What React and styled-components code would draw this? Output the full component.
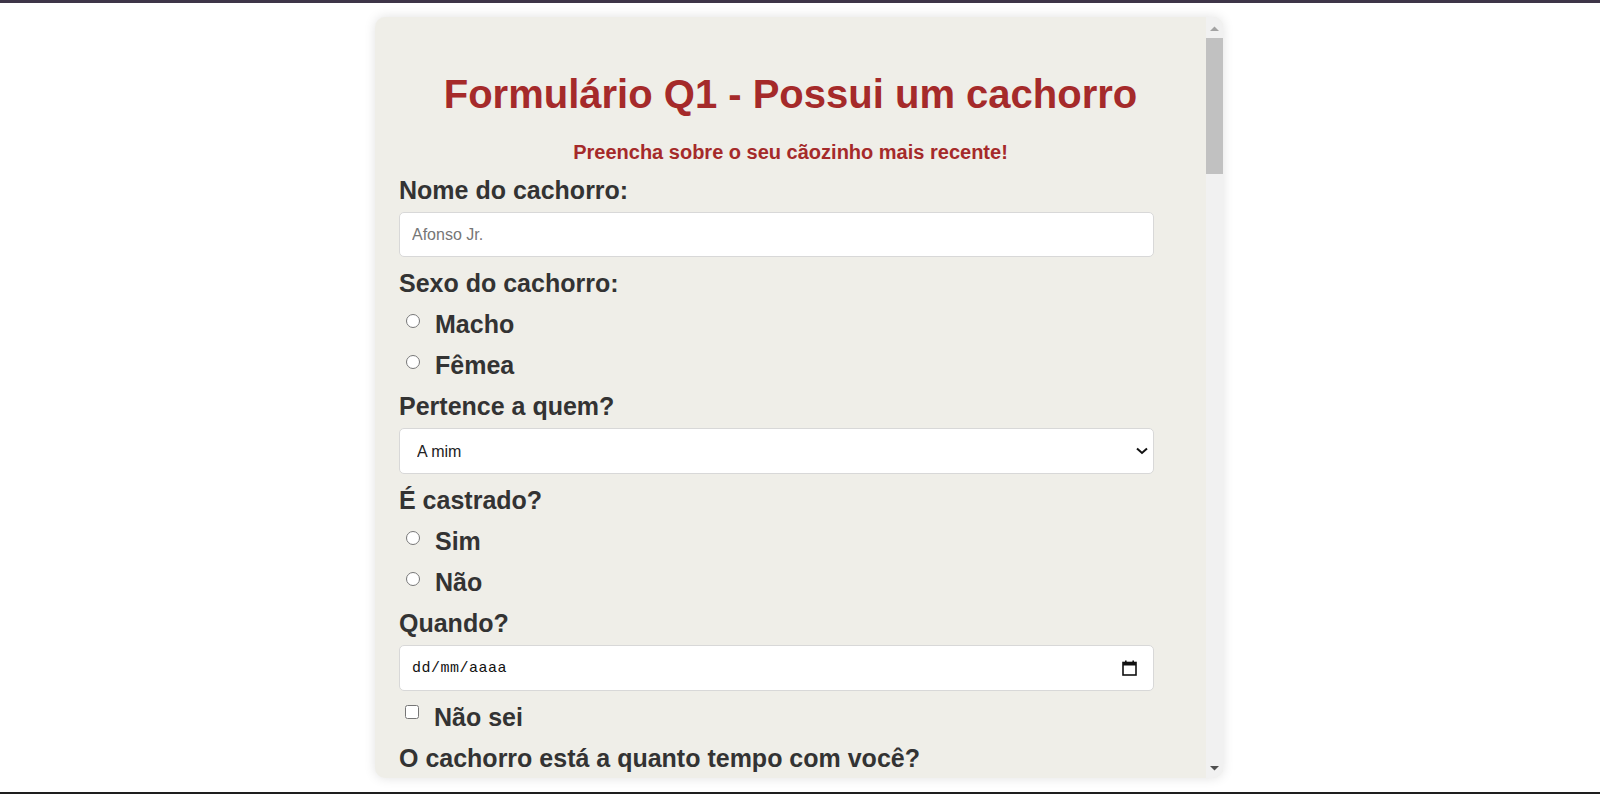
import styled, { createGlobalStyle } from 'styled-components';

const GlobalStyle = createGlobalStyle`
  html, body {
    margin: 0;
    padding: 0;
    background: #ffffff;
  }
  body {
    font-family: "Liberation Sans", Arial, sans-serif;
  }
`;

const Page = styled.div`
  box-sizing: border-box;
  height: 794px;
  border-top: 3px solid #3e3548;
  border-bottom: 2px solid #1e1e1e;
  padding-top: 14px;
  display: flex;
  justify-content: center;
  align-items: flex-start;
`;

const Card = styled.main`
  display: flex;
  width: 848px;
  height: 761px;
  margin-left: -2px;
  background: #efeee8;
  border-radius: 10px;
  box-shadow: 0 0 12px rgba(0, 0, 0, 0.12);
  overflow: hidden;
`;

const Viewport = styled.div`
  flex: 1;
  min-width: 0;
  overflow: hidden;
`;

const Rail = styled.div`
  width: 17px;
  flex-shrink: 0;
  display: flex;
  flex-direction: column;
  background: #f1f1f1;
`;

const RailButton = styled.div`
  height: ${(p) => p.$h}px;
  display: flex;
  justify-content: center;
  align-items: ${(p) => (p.$up ? 'flex-end' : 'flex-start')};
  padding: ${(p) => (p.$up ? '0 0 7px' : '5px 0 0')};
  box-sizing: border-box;
`;

const Thumb = styled.div`
  height: 136px;
  background: #c1c1c1;
`;

const Track = styled.div`
  flex: 1;
`;

const Sheet = styled.div`
  padding-top: 54px;
`;

const Title = styled.h1`
  margin: 0;
  font-size: 40px;
  line-height: 46px;
  font-weight: 700;
  color: #a52a2a;
  text-align: center;
`;

const Subtitle = styled.p`
  margin: 24px 0 0;
  font-size: 20px;
  line-height: 23px;
  font-weight: 700;
  color: #a52a2a;
  text-align: center;
`;

const Form = styled.form`
  margin: 12px 52px 0 24px;
  display: flex;
  flex-direction: column;
  gap: 12px;
`;

const Field = styled.div`
  display: flex;
  flex-direction: column;
  gap: 7px;
`;

const Question = styled.label`
  font-size: 25px;
  line-height: 29px;
  font-weight: 700;
  color: #333333;
`;

const boxBase = `
  box-sizing: border-box;
  width: 100%;
  background: #ffffff;
  border: 1px solid #d8d8d8;
  border-radius: 5px;
  font-family: "Liberation Sans", Arial, sans-serif;
  font-size: 16px;
  color: #222222;
  outline: none;
`;

const TextInput = styled.input`
  ${boxBase}
  height: 45px;
  padding: 0 12px;

  &::placeholder {
    color: #767676;
  }
`;

const SelectBox = styled.div`
  position: relative;
`;

const Select = styled.select`
  ${boxBase}
  display: block;
  height: 46px;
  padding: 0 30px 0 17px;
  appearance: none;
`;

const Chevron = styled.svg`
  position: absolute;
  right: 6px;
  top: 19px;
  pointer-events: none;
`;

const DateBox = styled.div`
  ${boxBase}
  display: flex;
  align-items: center;
  height: 46px;
  padding: 0 16px 0 12px;
`;

const DateText = styled.input`
  flex: 1;
  border: none;
  outline: none;
  background: transparent;
  padding: 0;
  font-family: "Liberation Mono", "DejaVu Sans Mono", monospace;
  font-size: 15px;
  letter-spacing: 0.5px;
  color: #111111;

  &::placeholder {
    color: #111111;
  }
`;

const Option = styled.label`
  display: flex;
  align-items: flex-start;
  font-size: 25px;
  line-height: 29px;
  font-weight: 700;
  color: #333333;
`;

const Radio = styled.input.attrs({ type: 'radio' })`
  width: 14px;
  height: 14px;
  margin: 4px 15px 0 7px;
`;

const Check = styled.input.attrs({ type: 'checkbox' })`
  width: 14px;
  height: 14px;
  margin: 2px 15px 0 6px;
`;

const TextArea = styled.textarea`
  ${boxBase}
  height: 120px;
  padding: 12px;
  resize: vertical;
`;

const Submit = styled.button`
  align-self: flex-start;
  height: 46px;
  padding: 0 28px;
  border: none;
  border-radius: 5px;
  background: #a52a2a;
  color: #ffffff;
  font-family: "Liberation Sans", Arial, sans-serif;
  font-size: 18px;
  font-weight: 700;
`;

const CalendarIcon = () => (
  <svg width="15" height="16" viewBox="0 0 15 16">
    <rect x="1" y="2.5" width="13" height="12.5" fill="none" stroke="#111" strokeWidth="1.6" />
    <rect x="1" y="2.5" width="13" height="3" fill="#111" />
    <rect x="3" y="0.5" width="1.6" height="2.5" fill="#111" />
    <rect x="10.4" y="0.5" width="1.6" height="2.5" fill="#111" />
  </svg>
);

const SelectArrow = () => (
  <Chevron width="12" height="8" viewBox="0 0 12 8">
    <polyline points="1,1.5 6,6 11,1.5" fill="none" stroke="#111" strokeWidth="2" />
  </Chevron>
);

const ChoiceGroup = ({ name, options }) =>
  options.map((opt) => (
    <Option key={opt}>
      <Radio name={name} value={opt} />
      {opt}
    </Option>
  ));

const App = () => (
  <>
    <GlobalStyle />
    <Page>
      <Card>
        <Viewport>
          <Sheet>
            <Title>Formulário Q1 - Possui um cachorro</Title>
            <Subtitle>Preencha sobre o seu cãozinho mais recente!</Subtitle>
            <Form onSubmit={(e) => e.preventDefault()}>
              <Field>
                <Question htmlFor="nome">Nome do cachorro:</Question>
                <TextInput id="nome" placeholder="Afonso Jr." />
              </Field>

              <Question>Sexo do cachorro:</Question>
              <ChoiceGroup name="sexo" options={['Macho', 'Fêmea']} />

              <Field>
                <Question htmlFor="dono">Pertence a quem?</Question>
                <SelectBox>
                  <Select id="dono" defaultValue="mim">
                    <option value="mim">A mim</option>
                    <option value="familia">À minha família</option>
                    <option value="outro">A outra pessoa</option>
                  </Select>
                  <SelectArrow />
                </SelectBox>
              </Field>

              <Question>É castrado?</Question>
              <ChoiceGroup name="castrado" options={['Sim', 'Não']} />

              <Field>
                <Question htmlFor="quando">Quando?</Question>
                <DateBox>
                  <DateText id="quando" placeholder="dd/mm/aaaa" />
                  <CalendarIcon />
                </DateBox>
              </Field>

              <Option>
                <Check />
                Não sei
              </Option>

              <Field>
                <Question htmlFor="tempo">O cachorro está a quanto tempo com você?</Question>
                <SelectBox>
                  <Select id="tempo" defaultValue="1">
                    <option value="1">Menos de 1 ano</option>
                    <option value="2">De 1 a 5 anos</option>
                    <option value="3">Mais de 5 anos</option>
                  </Select>
                  <SelectArrow />
                </SelectBox>
              </Field>

              <Field>
                <Question htmlFor="raca">Qual a raça?</Question>
                <TextInput id="raca" placeholder="Vira-lata" />
              </Field>

              <Question>Qual o porte?</Question>
              <ChoiceGroup name="porte" options={['Pequeno', 'Médio', 'Grande']} />

              <Field>
                <Question htmlFor="obs">Observações:</Question>
                <TextArea id="obs" placeholder="Conte um pouco sobre ele..." />
              </Field>

              <Submit type="submit">Enviar</Submit>
            </Form>
          </Sheet>
        </Viewport>
        <Rail>
          <RailButton $h={21} $up>
            <svg width="9" height="5" viewBox="0 0 9 5">
              <path d="M0 5 L4.5 0.5 L9 5 Z" fill="#a3a3a3" />
            </svg>
          </RailButton>
          <Thumb />
          <Track />
          <RailButton $h={17}>
            <svg width="9" height="5" viewBox="0 0 9 5">
              <path d="M0 0 L9 0 L4.5 4.5 Z" fill="#505050" />
            </svg>
          </RailButton>
        </Rail>
      </Card>
    </Page>
  </>
);

export default App;
